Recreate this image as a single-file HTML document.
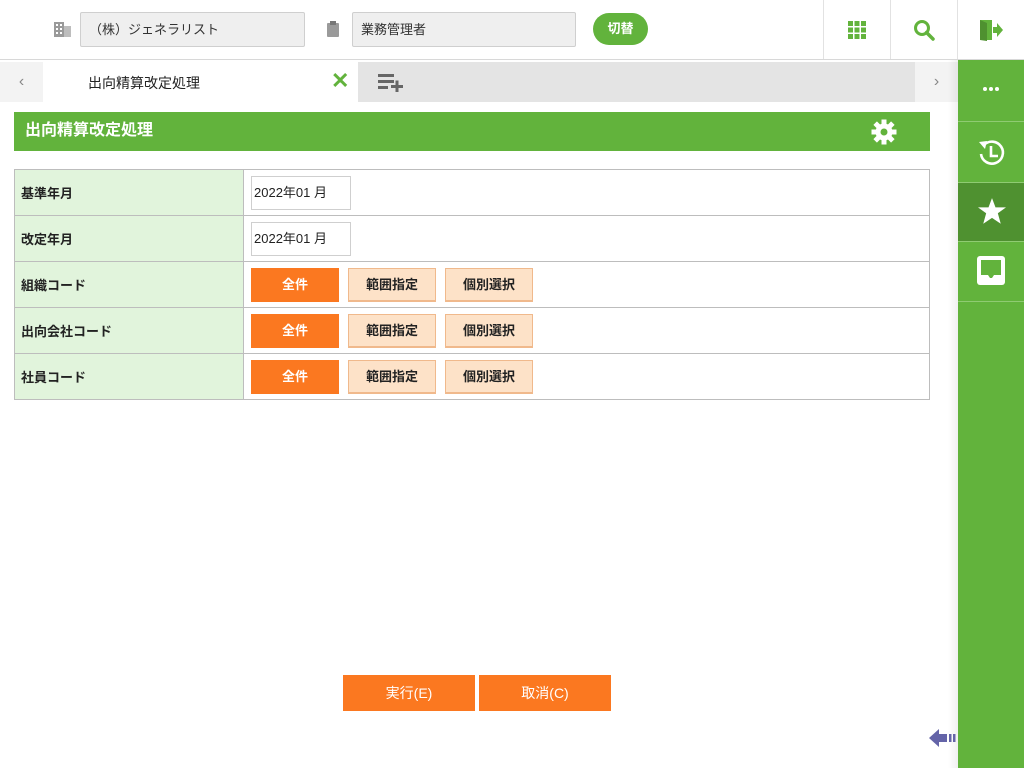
<!DOCTYPE html>
<html><head><meta charset="utf-8"><style>
*{box-sizing:border-box;margin:0;padding:0}
body{width:1024px;height:768px;overflow:hidden;background:#fff;font-family:"Liberation Sans","Noto Sans CJK JP",sans-serif;font-size:13px;color:#222;position:relative}
.abs{position:absolute}
.hdr{left:0;top:0;width:1024px;height:60px;border-bottom:1px solid #d8d8d8;background:#fff}
.inp{background:#efefef;border:1px solid #cfcfcf;height:35px;top:12px;line-height:33px;padding-left:8px;font-size:13px;color:#333;border-radius:2px}
.vdiv{top:0;width:1px;height:59px;background:#e2e2e2}
.tabbar{left:0;top:62px;width:958px;height:40px;background:#e4e4e4}
.side{left:958px;top:60px;width:66px;height:708px;background:#62b33c}
.side .it{position:absolute;left:0;width:66px;border-bottom:1px solid #8fcb72}
.title{left:14px;top:112px;width:916px;height:39px;background:#62b33c;color:#fff;font-weight:bold;font-size:16px;line-height:38px;padding-left:11px}
table{position:absolute;left:14px;top:169px;width:916px;border-collapse:collapse}
td{border:1px solid #bdbdbd;height:46px}
td.l{width:229px;background:#e1f4dc;font-weight:bold;padding-left:6px;font-size:13px}
td.r{padding-left:7px}
.date{display:inline-block;width:100px;height:34px;border:1px solid #cfcfcf;line-height:32px;padding-left:2px;font-size:13px}
.b{display:inline-block;height:34px;line-height:32px;text-align:center;font-weight:bold;font-size:13px;vertical-align:middle;margin-right:9px}
.bo{width:88px;background:#fb7820;color:#fff;border:1px solid #fb7820}
.bl{width:88px;background:#fde2c8;color:#222;border:1px solid #f0b98c;border-bottom:2px solid #f0b98c}
.fb{top:675px;width:132px;height:36px;background:#fb7820;color:#fff;text-align:center;line-height:36px;font-size:14px}
</style></head><body>
<div class="abs hdr"></div>
<svg class="abs" style="left:54px;top:21px" width="18" height="16" viewBox="0 0 18 16"><rect x="0" y="1" width="10" height="15" fill="#9a9a9a"/><rect x="10" y="5" width="7" height="11" fill="#bdbdbd"/><g fill="#fff"><rect x="2" y="3" width="2" height="2"/><rect x="6" y="3" width="2" height="2"/><rect x="2" y="7" width="2" height="2"/><rect x="6" y="7" width="2" height="2"/><rect x="2" y="11" width="2" height="2"/><rect x="6" y="11" width="2" height="2"/></g></svg>
<div class="abs inp" style="left:80px;width:225px">（株）ジェネラリスト</div>
<svg class="abs" style="left:327px;top:21px" width="12" height="16" viewBox="0 0 12 16"><rect x="0" y="2" width="12" height="14" rx="1" fill="#9a9a9a"/><rect x="3" y="0" width="6" height="4" fill="#777"/></svg>
<div class="abs inp" style="left:352px;width:224px">業務管理者</div>
<div class="abs" style="left:593px;top:13px;width:55px;height:32px;border-radius:16px;background:#62b33c;color:#fff;text-align:center;line-height:32px;font-size:13px;font-weight:bold">切替</div>
<div class="abs vdiv" style="left:823px"></div><div class="abs vdiv" style="left:890px"></div><div class="abs vdiv" style="left:957px"></div>
<svg class="abs" style="left:848px;top:21px" width="18" height="18" viewBox="0 0 18 18" fill="#62b33c"><rect x="0" y="0" width="5" height="5"/><rect x="6.5" y="0" width="5" height="5"/><rect x="13" y="0" width="5" height="5"/><rect x="0" y="6.5" width="5" height="5"/><rect x="6.5" y="6.5" width="5" height="5"/><rect x="13" y="6.5" width="5" height="5"/><rect x="0" y="13" width="5" height="5"/><rect x="6.5" y="13" width="5" height="5"/><rect x="13" y="13" width="5" height="5"/></svg>
<svg class="abs" style="left:913px;top:19px" width="22" height="22" viewBox="0 0 22 22"><circle cx="9" cy="9" r="6.5" fill="none" stroke="#62b33c" stroke-width="3"/><path d="M13.5 13.5L20 20" stroke="#62b33c" stroke-width="3.5" stroke-linecap="round"/></svg>
<svg class="abs" style="left:980px;top:19px" width="24" height="22" viewBox="0 0 24 22"><path d="M0 1H12V21H0Z" fill="#62b33c"/><path d="M0 1L7 4V22L0 21Z" fill="#4f9130"/><path d="M13 8H17V4L23 11L17 18V14H13Z" fill="#62b33c"/></svg>
<div class="abs tabbar"></div>
<div class="abs" style="left:0;top:62px;width:43px;height:40px;background:#f3f3f3;color:#888;text-align:center;line-height:40px;font-size:16px">‹</div>
<div class="abs" style="left:43px;top:62px;width:315px;height:40px;background:#fff;"><span style="position:absolute;left:45px;top:11px;font-size:14px">出向精算改定処理</span><span style="position:absolute;left:288px;top:6px;color:#62b33c;font-size:22px;font-weight:bold">✕</span></div>
<svg class="abs" style="left:378px;top:74px" width="26" height="18" viewBox="0 0 26 18" fill="#666"><rect x="0" y="0" width="16" height="3"/><rect x="0" y="6" width="16" height="3"/><rect x="0" y="12" width="10" height="3"/><rect x="13" y="11" width="12" height="3"/><rect x="17.5" y="6.5" width="3" height="11.5"/></svg>
<div class="abs" style="left:915px;top:62px;width:43px;height:40px;background:#f3f3f3;color:#888;text-align:center;line-height:40px;font-size:16px">›</div>
<div class="abs side">
<div class="it" style="top:0;height:62px"><svg style="position:absolute;left:25px;top:27px" width="16" height="4"><circle cx="2" cy="2" r="2" fill="#fff"/><circle cx="8" cy="2" r="2" fill="#fff"/><circle cx="14" cy="2" r="2" fill="#fff"/></svg></div>
<div class="it" style="top:62px;height:61px"><svg style="position:absolute;left:19px;top:15px" width="30" height="30" viewBox="0 0 30 30"><path d="M7 8A11 11 0 1 1 4 17" fill="none" stroke="#fff" stroke-width="2.6"/><path d="M2 5L10 4L8 12Z" fill="#fff"/><path d="M14 9V19H21" fill="none" stroke="#fff" stroke-width="2.6"/></svg></div>
<div class="it" style="top:123px;height:59px;background:#4f9130"><svg style="position:absolute;left:20px;top:15px" width="28" height="27" viewBox="0 0 24 23"><path d="M12 0L15 8H24L17 13L19.5 22L12 17L4.5 22L7 13L0 8H9Z" fill="#fff"/></svg></div>
<div class="it" style="top:182px;height:60px"><svg style="position:absolute;left:19px;top:14px" width="28" height="29" viewBox="0 0 28 29"><rect x="0" y="0" width="28" height="29" rx="3" fill="#fff"/><path d="M4 4H24V19H17L15 22H13L11 19H4Z" fill="#62b33c"/></svg></div>
</div>
<div class="abs" style="left:948px;top:60px;width:10px;height:708px;background:linear-gradient(to right,rgba(0,0,0,0),rgba(0,0,0,0.06))"></div>
<div class="abs title">出向精算改定処理</div>
<svg class="abs" style="left:871px;top:119px" width="26" height="26" viewBox="0 0 26 26"><g transform="translate(13,13)" fill="#fff"><circle r="8.5"/><g id="t"><rect x="-2.5" y="-12.5" width="5" height="6"/></g><use href="#t" transform="rotate(45)"/><use href="#t" transform="rotate(90)"/><use href="#t" transform="rotate(135)"/><use href="#t" transform="rotate(180)"/><use href="#t" transform="rotate(225)"/><use href="#t" transform="rotate(270)"/><use href="#t" transform="rotate(315)"/><circle r="3.5" fill="#62b33c"/></g></svg>
<table>
<tr><td class="l">基準年月</td><td class="r"><span class="date">2022年01 月</span></td></tr>
<tr><td class="l">改定年月</td><td class="r"><span class="date">2022年01 月</span></td></tr>
<tr><td class="l">組織コード</td><td class="r"><span class="b bo">全件</span><span class="b bl">範囲指定</span><span class="b bl">個別選択</span></td></tr>
<tr><td class="l">出向会社コード</td><td class="r"><span class="b bo">全件</span><span class="b bl">範囲指定</span><span class="b bl">個別選択</span></td></tr>
<tr><td class="l">社員コード</td><td class="r"><span class="b bo">全件</span><span class="b bl">範囲指定</span><span class="b bl">個別選択</span></td></tr>
</table>
<div class="abs fb" style="left:343px">実行(E)</div>
<div class="abs fb" style="left:479px">取消(C)</div>
<svg class="abs" style="left:929px;top:727px" width="29" height="22" viewBox="0 0 29 22" fill="#6464a8"><path d="M0 11L10 2V7H18V15H10V20Z"/><rect x="20" y="7" width="2.5" height="8"/><rect x="24" y="7" width="2.5" height="8"/></svg>
</body></html>
